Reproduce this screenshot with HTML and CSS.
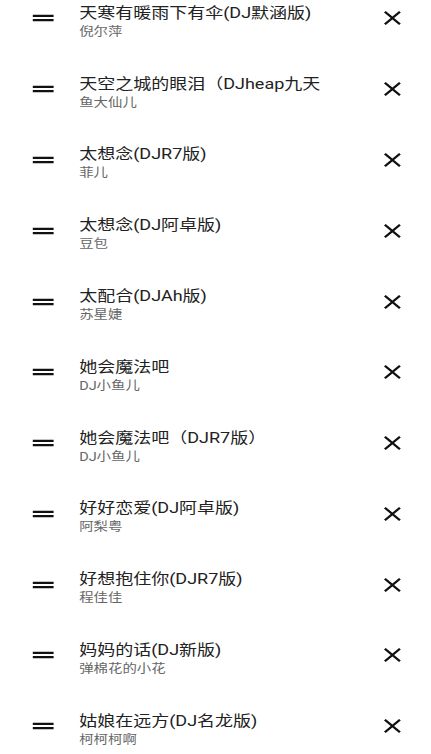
FILE: index.html
```html
<!DOCTYPE html>
<html lang="zh-CN">
<head>
  <meta charset="UTF-8">
  <title>播放列表</title>
  <link rel="stylesheet" href="styles.css">
</head>
<body>
  <div id="playlist" class="playlist"></div>

  <script>
    const songs = [
      { title: '天寒有暖雨下有伞(DJ默涵版)', artist: '倪尔萍' },
      { title: '天空之城的眼泪（DJheap九天', artist: '鱼大仙儿' },
      { title: '太想念(DJR7版)', artist: '菲儿' },
      { title: '太想念(DJ阿卓版)', artist: '豆包' },
      { title: '太配合(DJAh版)', artist: '苏星婕' },
      { title: '她会魔法吧', artist: 'DJ小鱼儿' },
      { title: '她会魔法吧（DJR7版）', artist: 'DJ小鱼儿' },
      { title: '好好恋爱(DJ阿卓版)', artist: '阿梨粤' },
      { title: '好想抱住你(DJR7版)', artist: '程佳佳' },
      { title: '妈妈的话(DJ新版)', artist: '弹棉花的小花' },
      { title: '姑娘在远方(DJ名龙版)', artist: '柯柯柯啊' }
    ];

    const dragIcon = '<svg class="drag" viewBox="0 0 24 24"><path d="M20 9H4v2h16V9zM4 15h16v-2H4v2z"/></svg>';
    const closeIcon = '<svg class="remove" viewBox="0 0 24 24"><path d="M19 6.41L17.59 5 12 10.59 6.41 5 5 6.41 10.59 12 5 17.59 6.41 19 12 13.41 17.59 19 19 17.59 13.41 12z"/></svg>';

    const list = document.getElementById('playlist');

    songs.forEach((song) => {
      const row = document.createElement('div');
      row.className = 'song';
      row.innerHTML = dragIcon +
        '<div class="info">' +
          '<div class="title">' + song.title + '</div>' +
          '<div class="artist">' + song.artist + '</div>' +
        '</div>' + closeIcon;
      row.querySelector('.remove').onclick = () => row.remove();
      list.appendChild(row);
    });
  </script>
</body>
</html>
```

FILE: styles.css
```css
body {
  margin: 0;
  background-color: #ffffff;
  font-family: Roboto, "Noto Sans CJK SC", sans-serif;
  overflow: hidden;
}

/* the capture is stretched sideways, so the list is drawn narrow and widened */
.playlist {
  width: calc(100% / 1.2);
  margin-top: -14px;
  transform: scaleX(1.2);
  transform-origin: left top;
}

.song {
  display: flex;
  align-items: center;
  padding: 16.9px 20px 16.9px 23px;
}

.drag {
  width: 26px;
  height: 26px;
  flex-shrink: 0;
  margin-right: 17px;
  margin-bottom: 6px;
  fill: #111111;
}

.info {
  flex: 1;
  min-width: 0;
  margin-right: 37px;
}

.title {
  font-size: 15px;
  line-height: 21px;
  white-space: nowrap;
  color: #222222;
}

.artist {
  font-size: 12px;
  line-height: 16px;
  color: #666666;
}

.remove {
  width: 24px;
  height: 24px;
  flex-shrink: 0;
  margin-bottom: 6px;
  fill: #111111;
  cursor: pointer;
}
```
